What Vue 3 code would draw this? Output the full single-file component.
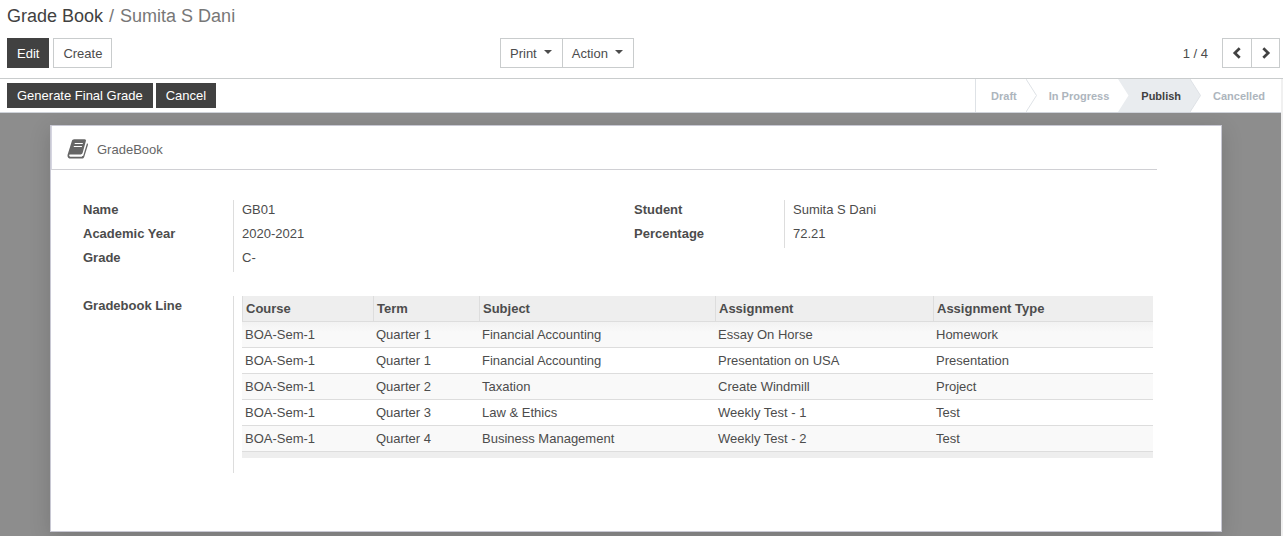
<script setup>
const leftFields = [
  { label: 'Name', value: 'GB01' },
  { label: 'Academic Year', value: '2020-2021' },
  { label: 'Grade', value: 'C-' },
]
const rightFields = [
  { label: 'Student', value: 'Sumita S Dani' },
  { label: 'Percentage', value: '72.21' },
]
const columns = ['Course', 'Term', 'Subject', 'Assignment', 'Assignment Type']
const lines = [
  ['BOA-Sem-1', 'Quarter 1', 'Financial Accounting', 'Essay On Horse', 'Homework'],
  ['BOA-Sem-1', 'Quarter 1', 'Financial Accounting', 'Presentation on USA', 'Presentation'],
  ['BOA-Sem-1', 'Quarter 2', 'Taxation', 'Create Windmill', 'Project'],
  ['BOA-Sem-1', 'Quarter 3', 'Law & Ethics', 'Weekly Test - 1', 'Test'],
  ['BOA-Sem-1', 'Quarter 4', 'Business Management', 'Weekly Test - 2', 'Test'],
]
</script>

<template>
  <div class="page">
    <header class="control-panel">
      <nav class="breadcrumb" aria-label="Breadcrumb">
        <a href="#">Grade Book</a>
        <span class="slash">/</span>
        <span>Sumita S Dani</span>
      </nav>
      <div class="toolbar">
        <div class="main-actions">
          <button type="button" class="btn dark">Edit</button>
          <button type="button" class="btn">Create</button>
        </div>
        <div class="group">
          <button v-for="name in ['Print', 'Action']" :key="name" type="button" class="btn menu">
            {{ name }}
            <svg class="caret" width="8" height="4" viewBox="0 0 8 4" aria-hidden="true">
              <path d="M0 0H8L4 4Z" fill="currentColor" />
            </svg>
          </button>
        </div>
        <div class="pager">
          <span>1 / 4</span>
          <div class="group">
            <button type="button" class="btn arrow" aria-label="Previous">
              <svg width="10" height="12" viewBox="0 0 10 12"><path d="M7.7 1.2 2.8 6l4.9 4.8" /></svg>
            </button>
            <button type="button" class="btn arrow" aria-label="Next">
              <svg width="10" height="12" viewBox="0 0 10 12"><path d="M2.3 1.2 7.2 6l-4.9 4.8" /></svg>
            </button>
          </div>
        </div>
      </div>
    </header>

    <main class="view">
      <div class="statusbar">
        <div class="status-actions">
          <button type="button" class="btn dark small">Generate Final Grade</button>
          <button type="button" class="btn dark small">Cancel</button>
        </div>
        <div class="stages">
          <button type="button" class="stage first">Draft</button>
          <svg class="chevron" viewBox="0 0 11 33" aria-hidden="true">
            <path class="edge" d="M0 0 10.5 16.5 0 33" />
          </svg>
          <button type="button" class="stage">In Progress</button>
          <svg class="chevron" viewBox="0 0 11 33" aria-hidden="true">
            <path class="fill" d="M0 0H11V33H0L10.5 16.5Z" />
          </svg>
          <button type="button" class="stage current" aria-current="step">Publish</button>
          <svg class="chevron" viewBox="0 0 11 33" aria-hidden="true">
            <path class="fill" d="M0 0 10.5 16.5 0 33Z" />
            <path class="edge" d="M0 0 10.5 16.5 0 33" />
          </svg>
          <button type="button" class="stage last">Cancelled</button>
        </div>
      </div>

      <div class="backdrop">
        <section class="sheet">
          <h1 class="sheet-title">
            <svg width="22" height="20" viewBox="0 0 22 20" aria-hidden="true">
              <path
                fill="#666"
                fill-rule="evenodd"
                d="M7.2 0.3H17.6C18.7 .3 19.2 1.1 18.9 2.1L15.6 14.1C15.3 15 14.6 15.5 13.7 15.5H3.1C2.5 15.5 2.1 15.8 2.2 16.5 2.3 17.3 3 17.8 4 17.8H14.6C15.4 17.8 16 17.4 16.3 16.6L20 4.2C20.8 4.5 21.1 5.1 20.9 5.9L17.3 17.7C16.9 18.9 16 19.6 14.8 19.6H3.8C1.6 19.6 0.2 18 .5 15.9L4.8 2.2C5.2 1 6 .3 7.2 .3ZM7.9 3.9 7.5 5.1H15.6L16 3.9ZM7 6.9 6.6 8.1H14.7L15.1 6.9Z"
              />
            </svg>
            <span>GradeBook</span>
          </h1>

          <div class="fields">
            <dl v-for="(fields, i) in [leftFields, rightFields]" :key="i" class="field-group">
              <div v-for="field in fields" :key="field.label" class="field">
                <dt>{{ field.label }}</dt>
                <dd>{{ field.value }}</dd>
              </div>
            </dl>
          </div>

          <div class="line-field">
            <h2 id="lines-label">Gradebook Line</h2>
            <div class="table-wrap">
              <table aria-labelledby="lines-label">
                <colgroup>
                  <col class="c-course" />
                  <col class="c-term" />
                  <col class="c-subject" />
                  <col class="c-assignment" />
                  <col />
                </colgroup>
                <thead>
                  <tr>
                    <th v-for="column in columns" :key="column" scope="col">{{ column }}</th>
                  </tr>
                </thead>
                <tbody>
                  <tr v-for="(line, i) in lines" :key="i">
                    <td v-for="(cell, j) in line" :key="j">{{ cell }}</td>
                  </tr>
                </tbody>
                <tfoot>
                  <tr><td colspan="5"></td></tr>
                </tfoot>
              </table>
            </div>
          </div>
        </section>
      </div>
    </main>
  </div>
</template>

<style>
body {
  background: #fff;
}
</style>

<style scoped>
.page {
  display: flex;
  flex-direction: column;
  min-height: 100vh;
  color: #4c4c4c;
  font: 13px/20px "Liberation Sans", Arial, sans-serif;
}
.page *,
.page {
  box-sizing: border-box;
}
.control-panel {
  border-bottom: 1px solid #c9cccd;
  padding: 0 3px 10px 7px;
}
.breadcrumb {
  display: flex;
  gap: 6px;
  height: 38px;
  padding-top: 4px;
  font-size: 18px;
  line-height: 24px;
  color: #777;
}
.breadcrumb a {
  color: #414141;
  text-decoration: none;
}
.toolbar {
  display: flex;
}
.main-actions {
  display: flex;
  gap: 4px;
  flex: 0 1 493px;
}
.btn {
  height: 30px;
  padding: 2px 9px 0;
  border: 1px solid #c9cccd;
  border-radius: 0;
  background: #fff;
  color: #4c4c4c;
  font: inherit;
  white-space: nowrap;
}
.btn.dark {
  border-color: #414141;
  background: #414141;
  color: #fff;
}
.btn.small {
  height: 25px;
  padding-top: 0;
}
.group {
  display: flex;
}
.group .btn + .btn {
  margin-left: -1px;
}
.menu {
  display: flex;
  align-items: center;
  gap: 7px;
  padding-right: 10px;
}
.caret {
  margin-bottom: 4px;
}
.pager {
  display: flex;
  align-items: center;
  gap: 14px;
  margin-left: auto;
}
.pager span {
  padding-top: 2px;
}
.btn.arrow {
  display: flex;
  align-items: center;
  justify-content: center;
  width: 30px;
  padding: 0;
}
.btn.arrow + .arrow {
  width: 29px;
}
.arrow path {
  fill: none;
  stroke: #414141;
  stroke-width: 2.7;
}
.view {
  display: flex;
  flex: 1;
  flex-direction: column;
  border-right: 2px solid #f0f0f0;
}
.statusbar {
  display: flex;
  justify-content: space-between;
  border-bottom: 1px solid #cfd3da;
  padding-left: 7px;
}
.status-actions {
  display: flex;
  align-items: center;
  gap: 3px;
}
.stages {
  display: flex;
  height: 33px;
  border-left: 1px solid #dee2e6;
}
.stage {
  border: 0;
  padding: 0 9px 0 12px;
  background: none;
  color: #adb5bd;
  font: bold 11px/20px "Liberation Sans", Arial, sans-serif;
  white-space: nowrap;
}
.stage.first {
  padding-left: 15px;
}
.stage.current {
  background: #e9ecef;
  color: #414141;
}
.stage.last {
  padding-right: 16px;
}
.chevron {
  width: 11px;
  height: 33px;
}
.chevron .edge {
  fill: none;
  stroke: #dee2e6;
}
.chevron .fill {
  fill: #e9ecef;
}
.backdrop {
  flex: 1;
  padding: 12px 59px 4px 50px;
  overflow: hidden;
  background: #8d8d8d;
}
.sheet {
  border: 1px solid #c8c8d3;
  padding-bottom: 58px;
  background: #fff;
  box-shadow: 0 5px 20px rgba(0, 0, 0, 0.15);
}
.sheet-title {
  display: flex;
  align-items: center;
  gap: 8px;
  height: 44px;
  margin: 0 64px 30px 0;
  border-bottom: 1px solid #d0d0d4;
  border-left: 1px solid #d5d5e0;
  padding: 3px 0 0 15px;
  color: #666;
  font-size: 13px;
  font-weight: normal;
}
.sheet-title span {
  padding-top: 2px;
}
.fields {
  display: grid;
  grid-template-columns: 1fr 1fr;
  align-items: start;
  padding: 0 36px 0 32px;
}
.field-group {
  margin: 0;
}
.field,
.line-field {
  display: grid;
  grid-template-columns: 150px minmax(0, 1fr);
}
dt,
h2 {
  margin: 0;
  font-size: 13px;
  font-weight: bold;
}
dd {
  margin: 0;
  height: 24px;
  border-left: 1px solid #ddd;
  padding-left: 8px;
}
.line-field {
  margin: 24px 68px 0 32px;
}
.table-wrap {
  border-left: 1px solid #ddd;
  padding: 0 0 15px 8px;
}
table {
  width: 100%;
  border-collapse: separate;
  border-spacing: 0;
  table-layout: fixed;
}
.c-course {
  width: 131px;
}
.c-term {
  width: 106px;
}
.c-subject {
  width: 236px;
}
.c-assignment {
  width: 218px;
}
th,
td {
  height: 26px;
  border-bottom: 1px solid #ddd;
  padding: 0 3px;
  text-align: left;
  white-space: nowrap;
}
th {
  border-left: 1px solid #ddd;
  background: #eee;
}
tbody tr:nth-child(odd) {
  background: #f9f9f9;
}
tbody tr:first-child {
  background: linear-gradient(#f2f2f2, #f9f9f9 10px);
}
tfoot td {
  height: 6px;
  border: 0;
  padding: 0;
  background: #eee;
}
</style>
